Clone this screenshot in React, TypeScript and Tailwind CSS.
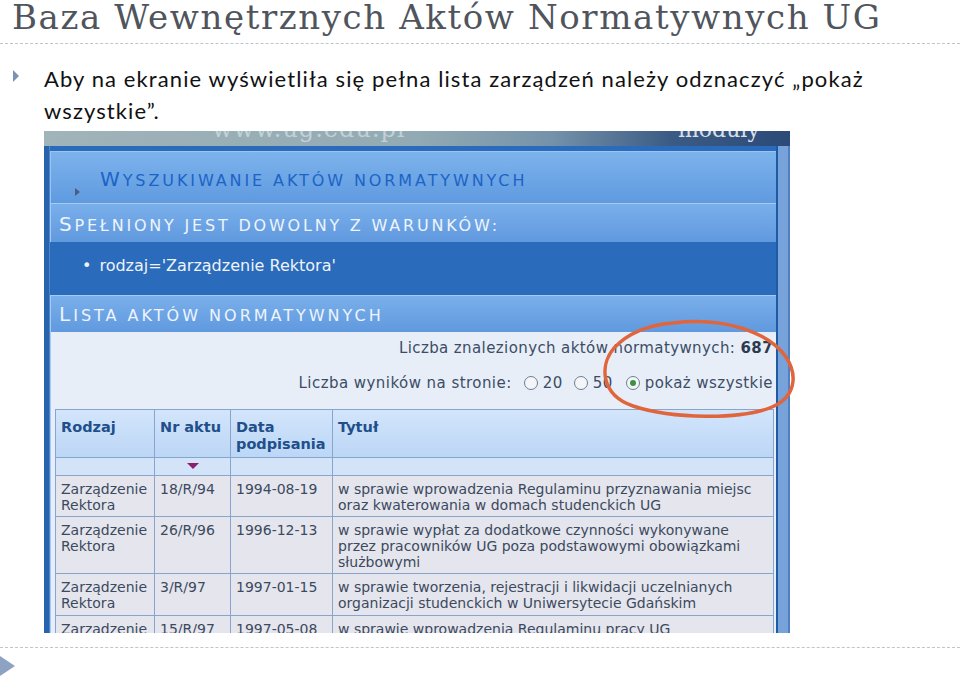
import React from "react";

const rows = [
  {
    rodzaj: ["Zarządzenie", "Rektora"],
    nr: "18/R/94",
    data: "1994-08-19",
    tytul: ["w sprawie wprowadzenia Regulaminu przyznawania miejsc", "oraz kwaterowania w domach studenckich UG"],
    h: "h-[41px]",
  },
  {
    rodzaj: ["Zarządzenie", "Rektora"],
    nr: "26/R/96",
    data: "1996-12-13",
    tytul: ["w sprawie wypłat za dodatkowe czynności wykonywane", "przez pracowników UG poza podstawowymi obowiązkami", "służbowymi"],
    h: "h-[57px]",
  },
  {
    rodzaj: ["Zarządzenie", "Rektora"],
    nr: "3/R/97",
    data: "1997-01-15",
    tytul: ["w sprawie tworzenia, rejestracji i likwidacji uczelnianych", "organizacji studenckich w Uniwersytecie Gdańskim"],
    h: "h-[42px]",
  },
  {
    rodzaj: ["Zarządzenie", "Rektora"],
    nr: "15/R/97",
    data: "1997-05-08",
    tytul: ["w sprawie wprowadzenia Regulaminu pracy UG"],
    h: "h-[42px]",
  },
];

function Radio({ checked }: { checked?: boolean }) {
  return (
    <span className="inline-flex items-center justify-center w-[14px] h-[14px] rounded-full border border-[#6f7f90] bg-[#f3f5f8] mr-[5px]">
      {checked && <span className="w-[6px] h-[6px] rounded-full bg-[#3f8f45]" />}
    </span>
  );
}

export default function App() {
  const cell = "border border-[#88a6cd] align-top px-[5px] pt-[5px] leading-[16px]";
  return (
    <div className="relative w-[960px] h-[680px] overflow-hidden bg-white">
      {/* Title */}
      <div className="h-[43px] pl-[12px] whitespace-nowrap text-[34px] leading-[34px] tracking-[1.6px] text-[#50545c] [font-family:'DejaVu_Serif',serif]">
        Baza Wewnętrznych Aktów Normatywnych UG
      </div>
      <div className="border-t border-dashed border-[#bcc6cf]" />

      {/* Bullet */}
      <div className="flex mt-[19px] text-[22px] leading-[32px] tracking-[1.1px] text-[#111] [font-family:Lato,sans-serif]">
        <div className="w-[44px] pl-[13px] pt-[7px]">
          <div className="w-0 h-0 border-y-[6px] border-y-transparent border-l-[6px] border-l-[#7d93b3]" />
        </div>
        <div>
          <div className="whitespace-nowrap">Aby na ekranie wyświetliła się pełna lista zarządzeń należy odznaczyć „pokaż</div>
          <div className="whitespace-nowrap">wszystkie”.</div>
        </div>
      </div>

      {/* Screenshot */}
      <div className="ml-[44px] mt-[4px] w-[746px] h-[502px] overflow-hidden flex flex-col bg-[#2b6bbb] [font-family:'DejaVu_Sans',Verdana,sans-serif]">
        {/* top strip */}
        <div className="h-[15px] flex overflow-hidden bg-[linear-gradient(90deg,#a0b4b9_0%,#92aab3_50%,#7592aa_68%,#3b5b84_84%,#2c4a78_100%)]">
          <div className="w-[168px]" />
          <div className="w-[466px] -mt-[15px] text-[24px] leading-[26px] text-[#d6e2e6]/70 [font-family:'DejaVu_Serif',serif] tracking-[1px]">
            www.ug.edu.pl
          </div>
          <div className="-mt-[13px] text-[22px] leading-[24px] text-[#eef2f8]/90 [font-family:'DejaVu_Serif',serif]">moduły</div>
        </div>
        <div className="flex flex-1 min-h-0">
          {/* left strip */}
          <div className="w-[6px] bg-[#2863ae] border-r border-[#4d86cc]" />
          {/* main */}
          <div className="flex-1 flex flex-col pt-[5px] min-w-0">
            {/* panel 1 */}
            <div className="h-[52px] flex items-end bg-gradient-to-b from-[#7db3ec] to-[#5f9ae0] border-t border-l border-[#9cc4f0] pl-[24px] pb-[7px]">
              <div className="w-0 h-0 border-y-[4px] border-y-transparent border-l-[5px] border-l-[#4c5d80] mr-[20px]" />
              <div className="pb-[7px] text-[#1c63c6] tracking-[2.9px] whitespace-nowrap leading-none">
                <span className="text-[20px]">W</span>
                <span className="text-[16px]">YSZUKIWANIE AKTÓW NORMATYWNYCH</span>
              </div>
            </div>
            {/* panel 2 */}
            <div className="h-[39px] flex items-center bg-gradient-to-b from-[#79afea] to-[#6199df] border-t border-l border-[#a6caf2] pl-[8px] pt-[2px]">
              <div className="text-[#eef4fc] tracking-[2.8px] whitespace-nowrap leading-none">
                <span className="text-[20px]">S</span>
                <span className="text-[16px]">PEŁNIONY JEST DOWOLNY Z WARUNKÓW:</span>
              </div>
            </div>
            {/* dark band */}
            <div className="h-[53px] pl-[32px] pt-[15px] text-[16px] leading-[18px] text-[#eef3fa] whitespace-nowrap">
              <span className="mr-[8px]">•</span>rodzaj='Zarządzenie Rektora'
            </div>
            {/* panel 3 */}
            <div className="h-[37px] flex items-center bg-gradient-to-b from-[#79afea] to-[#6199df] border-t border-l border-[#a6caf2] pl-[8px]">
              <div className="text-[#eef4fc] tracking-[3px] whitespace-nowrap leading-none">
                <span className="text-[20px]">L</span>
                <span className="text-[16px]">ISTA AKTÓW NORMATYWNYCH</span>
              </div>
            </div>
            {/* content */}
            <div className="flex-1 min-h-0 overflow-hidden bg-[#e8eef7] border-l border-[#a6caf2] pl-[4px] pr-[3px] pt-[7px] text-[#3b4d66]">
              <div className="h-[18px] text-right text-[15px] leading-[18px] tracking-[0.4px] whitespace-nowrap">
                Liczba znalezionych aktów normatywnych: <b className="text-[#2b3b52]">687</b>
              </div>
              <div className="h-[18px] mt-[17px] flex items-center justify-end text-[15px] leading-[18px] tracking-[0.45px] whitespace-nowrap">
                <span className="mr-[12px]">Liczba wyników na stronie:</span>
                <Radio />
                <span className="mr-[11px]">20</span>
                <Radio />
                <span className="mr-[13px]">50</span>
                <Radio checked />
                <span>pokaż wszystkie</span>
              </div>
              <table className="mt-[17px] w-[718px] border-collapse table-fixed text-[14px] text-[#3b4a5e]">
                <colgroup>
                  <col className="w-[99px]" />
                  <col className="w-[76px]" />
                  <col className="w-[102px]" />
                  <col className="w-[441px]" />
                </colgroup>
                <thead>
                  <tr className="bg-gradient-to-b from-[#d2e5fb] to-[#bcd6f6]">
                    {["Rodzaj", "Nr aktu", "Data podpisania", "Tytuł"].map((t) => (
                      <th
                        key={t}
                        className="h-[48px] border border-[#88a6cd] align-top text-left px-[5px] pt-[9px] leading-[17px] font-bold text-[14.5px] text-[#214f8a]"
                      >
                        {t === "Data podpisania" ? (
                          <>
                            Data
                            <br />
                            podpisania
                          </>
                        ) : (
                          t
                        )}
                      </th>
                    ))}
                  </tr>
                  <tr className="bg-[#d3e4f8]">
                    <td className="h-[18px] border border-[#88a6cd]" />
                    <td className="h-[18px] border border-[#88a6cd]">
                      <div className="flex justify-center">
                        <svg width="12" height="7" viewBox="0 0 12 7">
                          <polygon points="0,0 12,0 6,6" fill="#8b1f6e" />
                        </svg>
                      </div>
                    </td>
                    <td className="h-[18px] border border-[#88a6cd]" />
                    <td className="h-[18px] border border-[#88a6cd]" />
                  </tr>
                </thead>
                <tbody className="bg-[#e5e5ed]">
                  {rows.map((r, i) => (
                    <tr key={i}>
                      <td className={`${cell} ${r.h} whitespace-nowrap`}>
                        {r.rodzaj[0]}
                        <br />
                        {r.rodzaj[1]}
                      </td>
                      <td className={`${cell} ${r.h}`}>{r.nr}</td>
                      <td className={`${cell} ${r.h}`}>{r.data}</td>
                      <td className={`${cell} ${r.h} whitespace-nowrap`}>
                        {r.tytul.map((l, j) => (
                          <div key={j}>{l}</div>
                        ))}
                      </td>
                    </tr>
                  ))}
                </tbody>
              </table>
            </div>
          </div>
          {/* right strip */}
          <div className="w-[14px] flex">
            <div className="w-[2px] bg-[#1f5aa6]" />
            <div className="w-[10px] bg-[#77a2da]" />
            <div className="w-[2px] bg-[#4f80c2]" />
          </div>
        </div>
      </div>

      <div className="mt-[14px] border-t border-dashed border-[#bcc6cf]" />
      <div className="mt-[8px] w-0 h-0 border-y-[10px] border-y-transparent border-l-[15px] border-l-[#8ea3c4]" />

      {/* red hand-drawn oval */}
      <svg className="absolute left-0 top-0 pointer-events-none" width="960" height="680" viewBox="0 0 960 680">
        <path
          d="M 673 323 C 722 317, 768 331, 786 357 C 799 377, 794 398, 772 407 C 741 420, 672 419, 633 406 C 601 395, 599 366, 614 348 C 628 333, 648 325, 673 323"
          fill="none"
          stroke="#e0653c"
          strokeWidth="3.5"
          strokeLinecap="round"
        />
      </svg>
    </div>
  );
}
